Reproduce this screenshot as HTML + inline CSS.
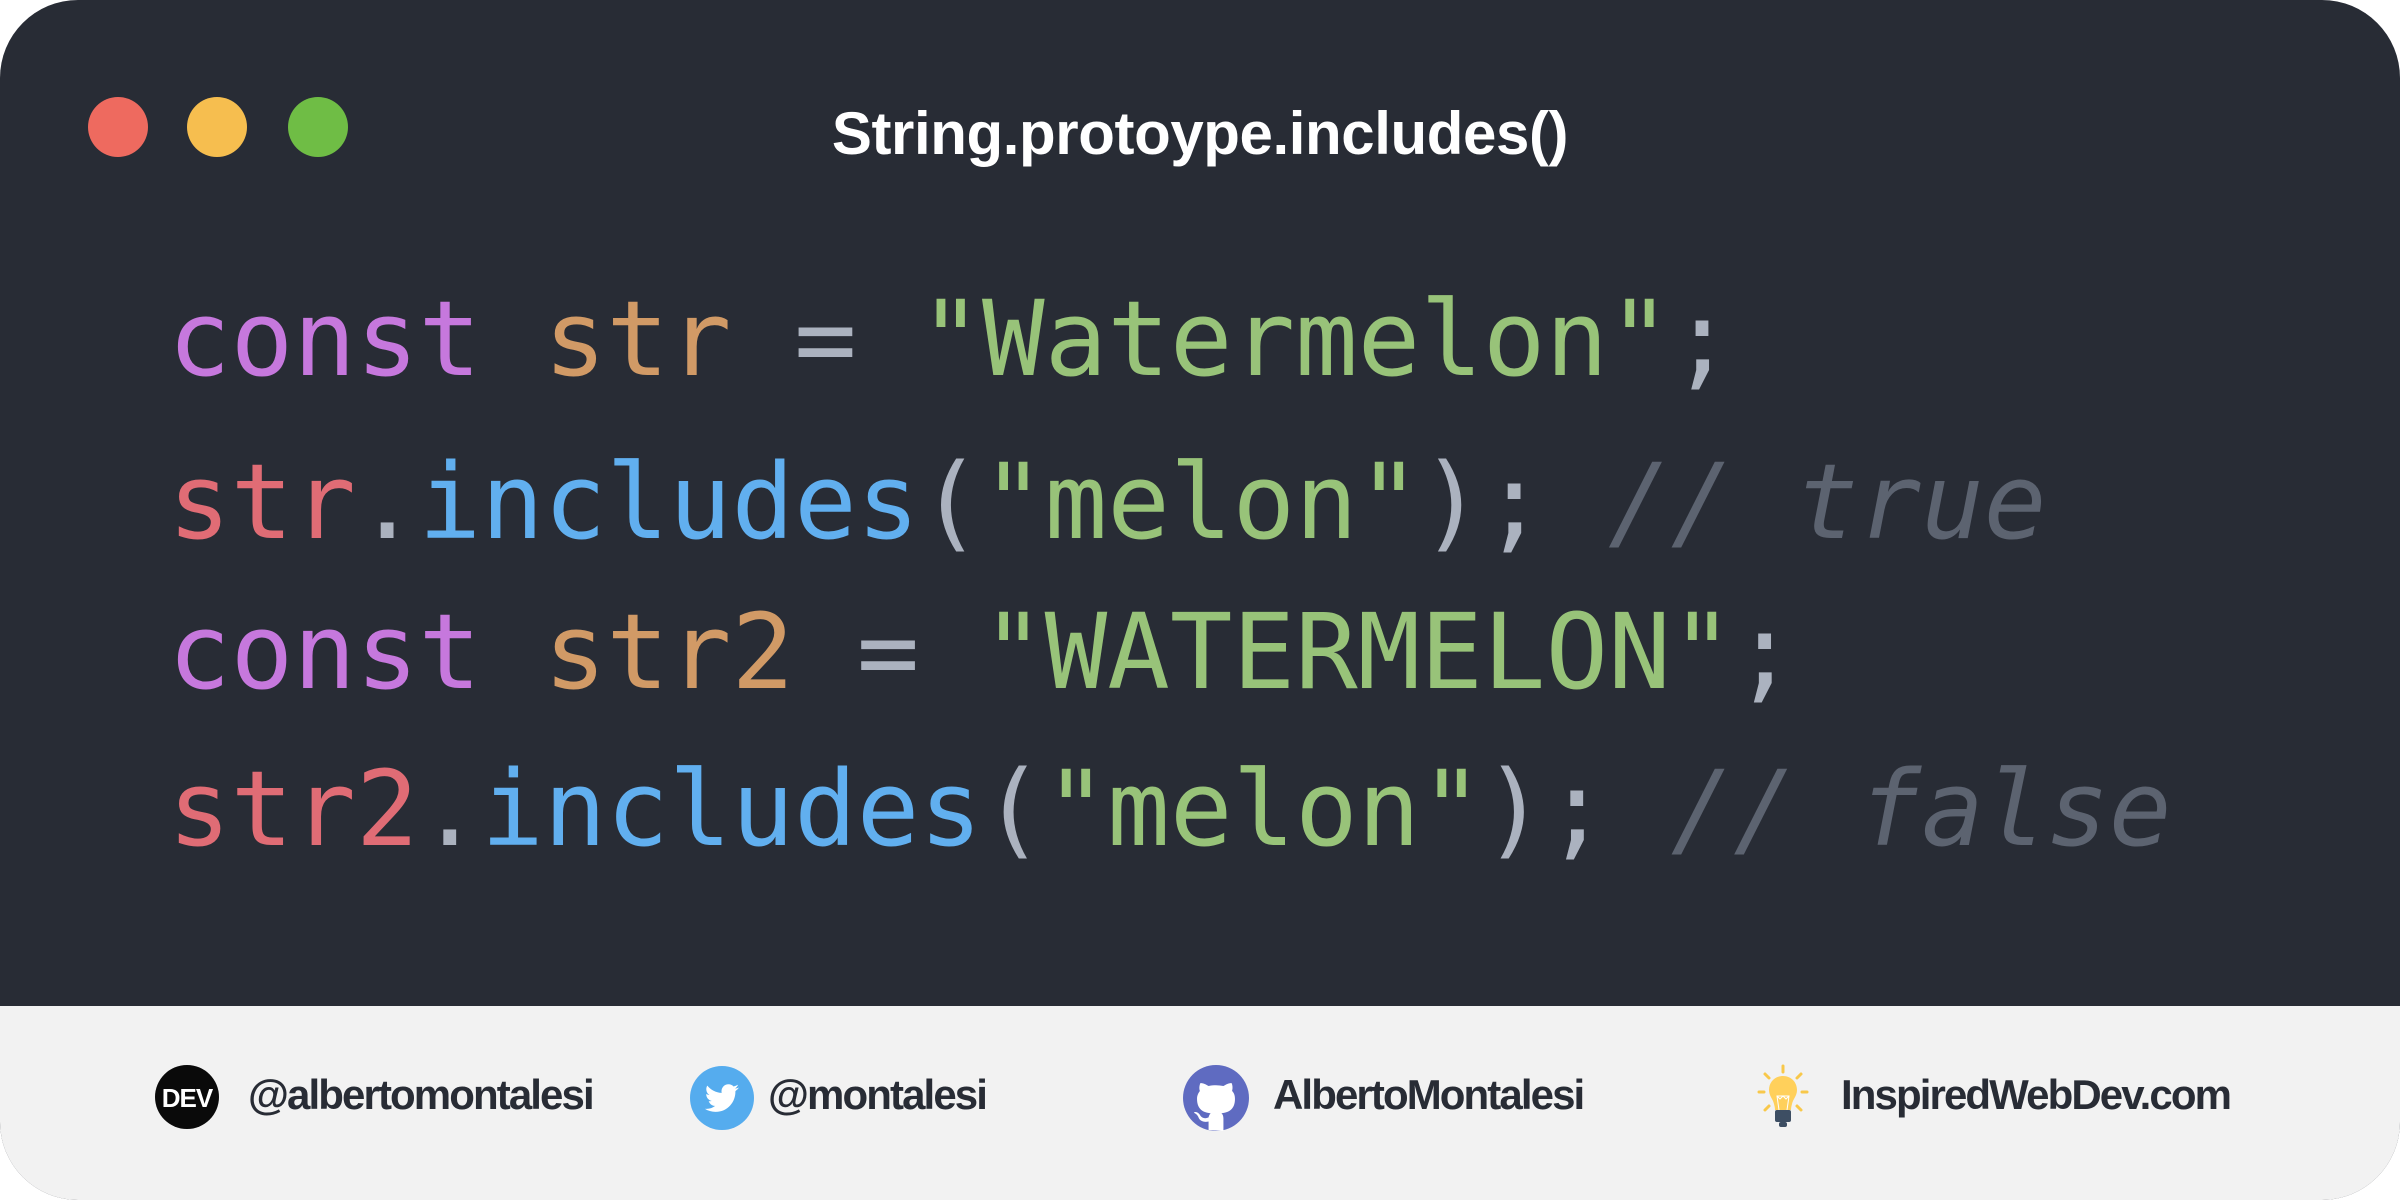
<!DOCTYPE html>
<html><head><meta charset="utf-8"><style>
html,body{margin:0;padding:0;background:#fff;width:2400px;height:1200px;overflow:hidden}
.card{position:absolute;left:0;top:0;width:2400px;height:1200px;border-radius:78px;overflow:hidden;background:#282c35}
.foot{position:absolute;left:0;top:1006px;width:2400px;height:194px;background:#f2f2f2}
.dot{position:absolute;width:60px;height:60px;border-radius:50%;top:97px}
.title{position:absolute;left:0;width:2400px;text-align:center;top:96px;font:bold 60px/76px "Liberation Sans",sans-serif;color:#fff;letter-spacing:-0.4px}
.code{position:absolute;left:168px;font:104px/1 "DejaVu Sans Mono",monospace;white-space:pre;color:#abb2bf}
.k{color:#c678dd}.v{color:#d19a66}.s{color:#98c379}.r{color:#e06c75}.f{color:#61afef}.c{color:#5c6370;font-style:italic}
.ft{position:absolute;font:bold 42px/1 "Liberation Sans",sans-serif;color:#282c35;letter-spacing:-1.9px;top:1074px}
svg{position:absolute}
</style></head><body>
<div class="card">
<div class="dot" style="left:88px;background:#ee6a5f"></div>
<div class="dot" style="left:187px;background:#f6be4f"></div>
<div class="dot" style="left:288px;background:#6fbd45"></div>
<div class="title">String.protoype.includes()</div>
<div class="code" style="top:287px"><span class="k">const</span> <span class="v">str</span> = <span class="s">"Watermelon"</span>;</div>
<div class="code" style="top:450px"><span class="r">str</span>.<span class="f">includes</span>(<span class="s">"melon"</span>); <span class="c">// true</span></div>
<div class="code" style="top:600px"><span class="k">const</span> <span class="v">str2</span> = <span class="s">"WATERMELON"</span>;</div>
<div class="code" style="top:757px"><span class="r">str2</span>.<span class="f">includes</span>(<span class="s">"melon"</span>); <span class="c">// false</span></div>
<div class="foot">
</div>
<svg style="left:155px;top:1065px" width="64" height="64" viewBox="0 0 64 64"><circle cx="32" cy="32" r="32" fill="#0a0a0a"/><text x="32" y="42" text-anchor="middle" font-family="Liberation Sans" font-weight="bold" font-size="26" fill="#fff" letter-spacing="-1">DEV</text></svg>
<div class="ft" style="left:248px">@albertomontalesi</div>
<svg style="left:690px;top:1066px" width="64" height="64" viewBox="0 0 64 64"><circle cx="32" cy="32" r="32" fill="#55acee"/><path fill="#fff" d="M49 21.5c-1.3.6-2.6.9-4 1.1 1.4-.9 2.5-2.2 3-3.8-1.4.8-2.900 1.4-4.4 1.7-1.3-1.4-3.1-2.2-5.1-2.2-3.9 0-7 3.1-7 7 0 .5.1 1.1.2 1.600-5.8-.3-11-3.1-14.4-7.3-.6 1-1 2.2-1 3.5 0 2.4 1.2 4.6 3.1 5.8-1.1 0-2.2-.4-3.2-.9v.1c0 3.4 2.4 6.2 5.6 6.9-.6.2-1.2.2-1.8.2-.4 0-.9 0-1.3-.1.9 2.8 3.5 4.8 6.5 4.8-2.4 1.9-5.4 3-8.7 3-.6 0-1.1 0-1.7-.1 3.1 2 6.8 3.1 10.7 3.1 12.9 0 19.9-10.7 19.9-19.9v-.9c1.4-1 2.6-2.2 3.6-3.6z"/></svg>
<div class="ft" style="left:768px">@montalesi</div>
<svg style="left:1183px;top:1065px" width="66" height="66" viewBox="0 0 16 16"><circle cx="8" cy="8" r="8" fill="#5f6bc1"/><path fill="#fff" d="M6.2 15.8v-2.1c-2 .4-2.4-.9-2.4-.9-.3-.8-.8-1-.8-1-.7-.4 0-.4 0-.4.7 0 1.1.7 1.1.7.6 1.1 1.7.8 2.1.6.1-.5.3-.8.5-1-1.6-.2-3.3-.8-3.3-3.5 0-.8.3-1.4.7-1.9-.1-.2-.3-.9.1-1.9 0 0 .6-.2 2 .7.6-.2 1.2-.2 1.8-.2s1.2.1 1.8.2c1.4-.9 2-.7 2-.7.4 1 .1 1.7.1 1.9.5.5.7 1.1.7 1.9 0 2.7-1.7 3.3-3.3 3.5.3.2.5.7.5 1.3v3z"/></svg>
<div class="ft" style="left:1273px">AlbertoMontalesi</div>
<svg style="left:1755px;top:1064px" width="56" height="68" viewBox="0 0 56 68"><g stroke="#f8c84a" stroke-width="3" stroke-linecap="round"><line x1="28" y1="2" x2="28" y2="8"/><line x1="10" y1="10" x2="14" y2="14"/><line x1="46" y1="10" x2="42" y2="14"/><line x1="4" y1="28" x2="9" y2="28"/><line x1="47" y1="28" x2="52" y2="28"/><line x1="10" y1="46" x2="14" y2="42"/><line x1="46" y1="46" x2="42" y2="42"/></g><path d="M28 12c-8 0-14 6-14 14 0 6 4 9 5 14 .5 2 1 4 1 6h16c0-2 .5-4 1-6 1-5 5-8 5-14 0-8-6-14-14-14z" fill="#ffd05b"/><path d="M24 46l-2-14h12l-2 14M22 32l3 3 3-3 3 3 3-3" stroke="#fff" stroke-width="1" fill="none"/><rect x="20" y="46" width="16" height="12" rx="2" fill="#3d4e63"/><rect x="24" y="58" width="8" height="5" rx="2" fill="#3d4e63"/></svg>
<div class="ft" style="left:1841px">InspiredWebDev.com</div>
</div>
</body></html>
